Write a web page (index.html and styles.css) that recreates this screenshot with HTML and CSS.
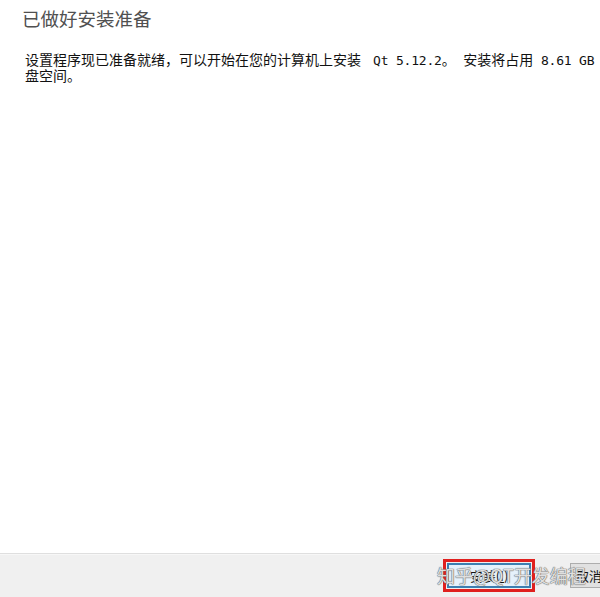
FILE: index.html
```html
<!DOCTYPE html>
<html lang="zh-CN">
<head>
<meta charset="utf-8">
<title>已做好安装准备</title>
<link rel="stylesheet" href="styles.css">
</head>
<body>
<div class="window">
  <main class="content">
    <h1 class="title">已做好安装准备</h1>
    <p class="message">设置程序现已准备就绪，可以开始在您的计算机上安装<span class="latin lead">Qt 5.12.2</span>。<span class="latin"> </span>安装将占用<span class="latin"> 8.61 GB </span>的磁<br>盘空间。</p>
  </main>
  <footer class="footer">
    <button class="btn btn-primary">安装(<u>I</u>)</button>
    <button class="btn btn-cancel">取消</button>
    <div class="watermark">知乎 @QT开发编程</div>
  </footer>
</div>
</body>
</html>
```

FILE: styles.css
```css
html, body {
  margin: 0;
  padding: 0;
  background: #ffffff;
}

body {
  width: 600px;
  height: 597px;
  overflow: hidden;
  font-family: "Noto Sans CJK SC", "Noto Sans", sans-serif;
}

.window {
  display: flex;
  flex-direction: column;
  height: 597px;
}

.content {
  flex: 1;
  padding: 5px 0 0 22px;
  white-space: nowrap;
}

.title {
  margin: 0;
  font-size: 18.5px;
  line-height: 26px;
  font-weight: 400;
  color: #505050;
}

.message {
  margin: 20px 0 0 3px;
  font-size: 14px;
  line-height: 16px;
  color: #111111;
}

.latin {
  font-family: "DejaVu Sans Mono", monospace;
  font-size: 13px;
  line-height: 10px;
  letter-spacing: -0.2px;
}

.lead {
  margin-left: 12px;
}

.footer {
  position: relative;
  flex: none;
  background: #f0f0f0;
  border-top: 1px solid #dfdfdf;
  box-shadow: inset 0 3px 0 -2px #f7f7f7;
  display: flex;
  align-items: flex-start;
  gap: 39px;
  padding: 9px 0 0 447px;
  box-sizing: border-box;
  height: 44px;
  white-space: nowrap;
  overflow: hidden;
}

.btn {
  flex: none;
  width: 84px;
  height: 25px;
  padding: 0;
  font-family: "Noto Sans CJK SC", sans-serif;
  font-size: 13px;
  line-height: 21px;
  color: #111;
  box-sizing: border-box;
}

.btn-primary {
  background: #e5f1fb;
  border: 2px solid #3c7fb1;
  outline: 3px solid #e0201e;
  outline-offset: 1px;
}

.btn-cancel {
  background: #e1e1e1;
  border: 1px solid #adadad;
  text-align: left;
  padding-left: 5px;
}

.watermark {
  position: absolute;
  left: 437px;
  top: 8px;
  font-size: 18px;
  line-height: 26px;
  word-spacing: -4px;
  color: rgba(255, 255, 255, 0.8);
  text-shadow: 0 0 1px #6e6e6e, 0 0 1px #6e6e6e, 0 0 1px #6e6e6e;
  pointer-events: none;
}
```
